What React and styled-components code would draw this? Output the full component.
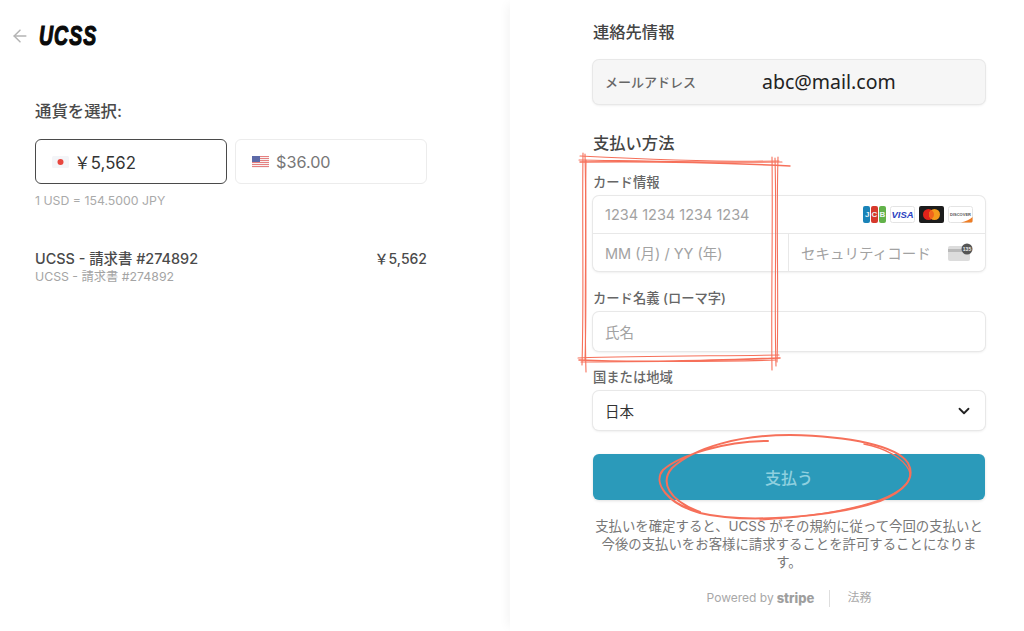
import React from "react";
import styled, { createGlobalStyle } from "styled-components";
import { ArrowLeft, ChevronDown } from "lucide-react";

const GlobalStyle = createGlobalStyle`
  html, body { margin: 0; padding: 0; background: #fff; }
  body {
    font-family: Inter, "Noto Sans CJK JP", "Noto Sans", sans-serif;
    color: #3d3d3d;
    overflow: hidden;
  }
`;

const Page = styled.div`
  position: relative;
  display: grid;
  grid-template-columns: 510px 514px;
  width: 1024px;
  height: 631px;
  overflow: hidden;
`;

const Summary = styled.section`
  padding: 26px 83px 0 35px;
`;

const Brand = styled.div`
  display: flex;
  align-items: center;
  height: 20px;
  margin-left: -25px;
  gap: 9px;
  color: #b4b4b4;
`;

const Logo = styled.span`
  display: inline-block;
  font-family: "Liberation Sans", sans-serif;
  font-size: 27px;
  line-height: 20px;
  font-weight: 700;
  font-style: italic;
  letter-spacing: 1.5px;
  color: #0a0a0a;
  -webkit-text-stroke: 1.2px #0a0a0a;
  transform: scaleX(0.72);
  transform-origin: left center;
`;

const CurrencyTitle = styled.h2`
  margin: 55px 0 0;
  font-size: 16.4px;
  line-height: 20px;
  font-weight: 500;
  color: #4a4a4a;
`;

const CurrencyRow = styled.div`
  display: grid;
  grid-template-columns: 192px 192px;
  gap: 8px;
  margin-top: 18px;
`;

const CurrencyTab = styled.div`
  display: flex;
  align-items: center;
  gap: ${(p) => (p.$active ? 5 : 7)}px;
  height: 45px;
  box-sizing: border-box;
  padding-left: 16px;
  border-radius: 6px;
  border: ${(p) => (p.$active ? "1.5px solid #4a4a4a" : "1px solid #ececec")};
  font-size: ${(p) => (p.$active ? 16.8 : 16.2)}px;
  color: ${(p) => (p.$active ? "#333" : "#777")};
`;

const Rate = styled.div`
  margin-top: 9px;
  font-size: 12.3px;
  line-height: 16px;
  color: #aaa;
`;

const LineItem = styled.div`
  display: flex;
  justify-content: space-between;
  margin-top: 41px;
  font-size: 14.4px;
  line-height: 18px;
  font-weight: 500;
  color: #4a4a4a;
`;

const LinePrice = styled.span`
  font-size: 14px;
`;

const LineSub = styled.div`
  font-size: 12.3px;
  line-height: 17px;
  color: #a4a4a4;
`;

const Checkout = styled.section`
  padding: 22px 39px 0 83px;
  box-shadow: -6px 0 10px -4px rgba(0, 0, 0, 0.05);
`;

const SectionTitle = styled.h2`
  margin: ${(p) => p.$top || 0}px 0 0;
  font-size: 16.3px;
  line-height: 20px;
  font-weight: 500;
  color: #444;
`;

const EmailBox = styled.div`
  display: flex;
  align-items: center;
  height: 44px;
  box-sizing: border-box;
  margin-top: 18px;
  padding: 0 0 2px 12px;
  background: #f6f6f6;
  border-radius: 6px;
  box-shadow: 0 0 0 1px #e8e8e8, 0 1px 3px rgba(0, 0, 0, 0.12);
`;

const EmailLabel = styled.span`
  width: 157px;
  font-size: 13px;
  font-weight: 500;
  color: #666;
`;

const EmailValue = styled.span`
  font-family: "Noto Sans", sans-serif;
  font-size: 19.5px;
  color: #222;
`;

const FieldLabel = styled.div`
  margin-top: ${(p) => p.$top}px;
  font-size: 13.3px;
  line-height: 17px;
  font-weight: 500;
  color: #666;
`;

const FieldGroup = styled.div`
  margin-top: 5px;
  background: #fff;
  border-radius: 6px;
  box-shadow: 0 0 0 1px #e8e8e8, 0 1px 3px rgba(0, 0, 0, 0.12);
`;

const FieldRow = styled.div`
  display: flex;
  align-items: center;
  justify-content: space-between;
  height: ${(p) => p.$h || 37}px;
  box-sizing: border-box;
  padding: 0 ${(p) => p.$right || 12}px 0 12px;
  font-size: 14.5px;
  color: ${(p) => (p.$filled ? "#333" : "#a2a2a2")};
`;

const SplitRow = styled.div`
  display: grid;
  grid-template-columns: 195px 197px;
  border-top: 1px solid #e8e8e8;
  & > *:last-child { border-left: 1px solid #e8e8e8; }
`;

const Brands = styled.div`
  display: flex;
  gap: 4px;
`;

const PayButton = styled.button`
  display: block;
  width: 100%;
  height: 46px;
  margin-top: 24px;
  border: 0;
  border-radius: 6px;
  background: #2b9aba;
  font: 500 16px Inter, "Noto Sans CJK JP", sans-serif;
  color: #8fd0df;
  box-shadow: 0 1px 3px rgba(0, 0, 0, 0.12);
`;

const Legal = styled.p`
  margin: 17px 0 0;
  font-size: 13.4px;
  line-height: 18px;
  text-align: center;
  color: #777;
`;

const Footer = styled.div`
  display: flex;
  justify-content: center;
  align-items: center;
  margin-top: 18px;
  font-size: 12px;
  line-height: 18px;
  color: #a8a8a8;
`;

const Stripe = styled.b`
  margin-left: 3px;
  font-size: 13px;
  font-weight: 800;
  color: #9e9e9e;
`;

const Divider = styled.span`
  width: 1px;
  height: 17px;
  margin: 0 17px 0 15px;
  background: #dedede;
`;

const Sketch = styled.svg`
  position: absolute;
  left: 0;
  top: 0;
  pointer-events: none;
`;

const JapanFlag = () => (
  <svg width="17" height="12" viewBox="0 0 17 12">
    <rect width="17" height="12" rx="1.5" fill="#f4f5f8" />
    <circle cx="8.5" cy="6" r="3" fill="#e8473f" />
  </svg>
);

const UsFlag = () => (
  <svg width="17" height="12" viewBox="0 0 17 12">
    <rect width="17" height="12" rx="1" fill="#f7f1f1" />
    {[0, 2, 4, 6, 8, 10].map((y) => (
      <rect key={y} y={y} width="17" height="1" fill="#e58080" />
    ))}
    <rect width="8" height="6" fill="#5d6aa8" />
  </svg>
);

const JcbCard = () => (
  <svg width="23" height="17" viewBox="0 0 23 17">
    <rect width="7" height="17" rx="2" fill="#1a83b8" />
    <rect x="8" width="7" height="17" rx="2" fill="#d6392c" />
    <rect x="16" width="7" height="17" rx="2" fill="#62b24a" />
    <g fontFamily="Liberation Sans" fontSize="8" fontWeight="700" fill="#e8f2f4">
      <text x="2" y="11">J</text>
      <text x="8.5" y="11">C</text>
      <text x="16.5" y="11">B</text>
    </g>
  </svg>
);

const VisaCard = () => (
  <svg width="25" height="17" viewBox="0 0 25 17">
    <rect x=".5" y=".5" width="24" height="16" rx="2" fill="#fff" stroke="#e4e4e4" />
    <text x="12.5" y="12" textAnchor="middle" fontFamily="Liberation Sans" fontSize="9.5" fontWeight="700" fontStyle="italic" fill="#2a3fc0">VISA</text>
  </svg>
);

const MasterCard = () => (
  <svg width="25" height="17" viewBox="0 0 25 17">
    <rect width="25" height="17" rx="2" fill="#1c1c1c" />
    <circle cx="9.5" cy="8.5" r="5.5" fill="#e2231a" />
    <circle cx="15.5" cy="8.5" r="5.5" fill="#f49b1c" />
    <path d="M12.5 3.9a5.5 5.5 0 0 1 0 9.2a5.5 5.5 0 0 1 0-9.2z" fill="#f0641c" />
  </svg>
);

const DiscoverCard = () => (
  <svg width="25" height="17" viewBox="0 0 25 17">
    <rect x=".5" y=".5" width="24" height="16" rx="2" fill="#fff" stroke="#e4e4e4" />
    <text x="12.5" y="9.6" textAnchor="middle" fontFamily="Liberation Sans" fontSize="4" fontWeight="700" fill="#555">DISCOVER</text>
    <path d="M13 16.5C18 15.5 22 13.5 24.5 11V15a1.5 1.5 0 0 1-1.5 1.5z" fill="#ef7d23" />
  </svg>
);

const CvcCard = () => (
  <svg width="25" height="20" viewBox="0 0 25 20">
    <rect y="3" width="22" height="15" rx="2" fill="#dcdcdc" />
    <rect y="6" width="22" height="3" fill="#b9b9b9" />
    <circle cx="19" cy="6" r="5.5" fill="#555" />
    <text x="19" y="7.8" textAnchor="middle" fontFamily="Liberation Sans" fontSize="5" fontWeight="700" fill="#eee">135</text>
  </svg>
);

const Annotations = () => (
  <Sketch width="1024" height="631" viewBox="0 0 1024 631" fill="none" stroke="#f6705a" strokeLinecap="round">
    <g strokeWidth="1.1">
      <path d="M580 156C640 159 720 162 779 161" />
      <path d="M579 160C640 161 720 163 782 162" />
      <path d="M580 162C650 161 730 163 790 166" strokeWidth="1.4" />
      <path d="M583 153C582 220 584 300 582 365" />
      <path d="M585 154C587 230 584 300 586 372" />
      <path d="M586 160C585 230 587 300 585 360" />
      <path d="M772 157C773 230 771 300 772 370" />
      <path d="M775 158C777 230 774 300 776 366" />
      <path d="M778 157C776 230 779 300 777 362" />
      <path d="M578 358C640 356 720 356 779 355" />
      <path d="M579 360C650 363 720 360 780 358" strokeWidth="1.6" />
      <path d="M581 362C650 361 720 362 776 360" />
    </g>
    <g strokeWidth="2">
      <path d="M768 441C725 441 680 455 663 470C652 483 668 504 700 513C745 524 835 517 880 501C905 491 916 478 908 463C897 446 850 436 790 435C740 435 695 447 672 468C660 482 668 500 700 512" />
      <path d="M864 444C885 448 903 458 909 470C913 480 905 490 880 500C850 511 800 518 760 520" strokeWidth="1.4" />
    </g>
  </Sketch>
);

export default function App() {
  return (
    <Page>
      <GlobalStyle />
      <Summary>
        <Brand>
          <ArrowLeft size={20} strokeWidth={1.8} />
          <Logo>UCSS</Logo>
        </Brand>
        <CurrencyTitle>通貨を選択:</CurrencyTitle>
        <CurrencyRow>
          <CurrencyTab $active>
            <JapanFlag />
            ￥5,562
          </CurrencyTab>
          <CurrencyTab>
            <UsFlag />
            $36.00
          </CurrencyTab>
        </CurrencyRow>
        <Rate>1 USD = 154.5000 JPY</Rate>
        <LineItem>
          <span>UCSS - 請求書 #274892</span>
          <LinePrice>￥5,562</LinePrice>
        </LineItem>
        <LineSub>UCSS - 請求書 #274892</LineSub>
      </Summary>

      <Checkout>
        <SectionTitle>連絡先情報</SectionTitle>
        <EmailBox>
          <EmailLabel>メールアドレス</EmailLabel>
          <EmailValue>abc@mail.com</EmailValue>
        </EmailBox>
        <SectionTitle $top={29}>支払い方法</SectionTitle>
        <FieldLabel $top={21}>カード情報</FieldLabel>
        <FieldGroup>
          <FieldRow>
            1234 1234 1234 1234
            <Brands>
              <JcbCard />
              <VisaCard />
              <MasterCard />
              <DiscoverCard />
            </Brands>
          </FieldRow>
          <SplitRow>
            <FieldRow>MM (月) / YY (年)</FieldRow>
            <FieldRow $right={12}>
              セキュリティコード
              <CvcCard />
            </FieldRow>
          </SplitRow>
        </FieldGroup>
        <FieldLabel $top={19}>カード名義 (ローマ字)</FieldLabel>
        <FieldGroup>
          <FieldRow $h={39}>氏名</FieldRow>
        </FieldGroup>
        <FieldLabel $top={18}>国または地域</FieldLabel>
        <FieldGroup>
          <FieldRow $h={39} $filled>
            日本
            <ChevronDown size={18} strokeWidth={2.4} color="#222" />
          </FieldRow>
        </FieldGroup>
        <PayButton>支払う</PayButton>
        <Legal>
          支払いを確定すると、UCSS がその規約に従って今回の支払いと今後の支払いをお客様に請求することを許可することになります。
        </Legal>
        <Footer>
          Powered by <Stripe>stripe</Stripe>
          <Divider />
          法務
        </Footer>
      </Checkout>
      <Annotations />
    </Page>
  );
}
